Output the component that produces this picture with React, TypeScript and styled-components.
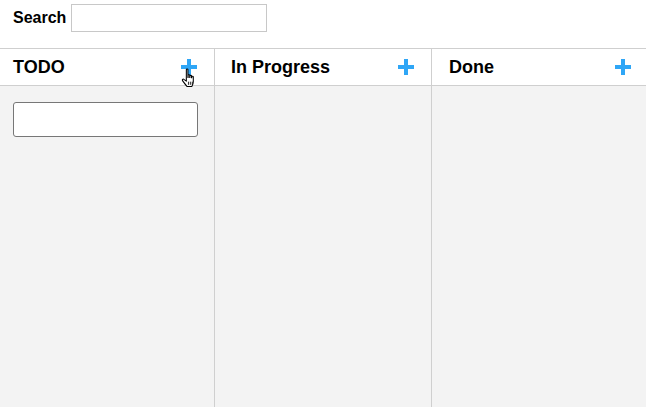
import { createGlobalStyle } from "styled-components";
import styled from "styled-components";

const GlobalStyle = createGlobalStyle`
  html, body {
    margin: 0;
    padding: 0;
    background: #fff;
    font-family: "Liberation Sans", Arial, sans-serif;
  }
`;

const columns = [
  { id: "todo", title: "TODO", editing: true, padLeft: 13, padRight: 17 },
  { id: "progress", title: "In Progress", editing: false, padLeft: 16, padRight: 17 },
  { id: "done", title: "Done", editing: false, padLeft: 17, padRight: 15 },
];

const PlusIcon = () => (
  <svg width="16" height="16" viewBox="0 0 16 16">
    <rect x="6" y="0" width="4" height="16" fill="#2fa6f6" />
    <rect x="0" y="6" width="16" height="4" fill="#2fa6f6" />
  </svg>
);

const HandCursor = () => (
  <svg width="17" height="20" viewBox="0 0 16 19">
    <path
      d="M5 1.5c0-.8 1.5-.8 1.5 0V9h.2V7c0-.8 1.5-.8 1.5 0v2h.2V7.6c0-.8 1.5-.8 1.5 0V9.3h.2V8.4c0-.8 1.5-.8 1.5 0V13c0 2-1 3.8-1.4 4.5H5.6C4.8 16.5 2.4 13.5 1.4 12c-.7-1 .4-2 1.3-1.2L5 12.5V1.5z"
      fill="#fff"
      stroke="#000"
      strokeWidth="1"
      strokeLinejoin="round"
    />
    <path d="M7 13v3M8.8 13v3M10.6 13v3" stroke="#000" strokeWidth="0.8" />
  </svg>
);

export default function App() {
  return (
    <Page>
      <GlobalStyle />
      <SearchBar>
        <SearchLabel>Search</SearchLabel>
        <SearchInput type="text" />
      </SearchBar>
      <Board>
        {columns.map((col) => (
          <Column key={col.id}>
            <ColumnHeader $padLeft={col.padLeft} $padRight={col.padRight}>
              <ColumnTitle>{col.title}</ColumnTitle>
              <AddButton>
                <PlusIcon />
                {col.editing && (
                  <CursorWrap>
                    <HandCursor />
                  </CursorWrap>
                )}
              </AddButton>
            </ColumnHeader>
            <ColumnBody>{col.editing && <CardInput type="text" />}</ColumnBody>
          </Column>
        ))}
      </Board>
    </Page>
  );
}

const Page = styled.div`
  display: flex;
  flex-direction: column;
  height: 407px;
  width: 646px;
`;

const SearchBar = styled.div`
  display: flex;
  align-items: flex-start;
  height: 48px;
  padding: 4px 13px 0;
  box-sizing: border-box;
  gap: 5px;
`;

const SearchLabel = styled.label`
  font-size: 16px;
  font-weight: bold;
  color: #000;
  line-height: 28px;
`;

const SearchInput = styled.input`
  width: 196px;
  height: 28px;
  box-sizing: border-box;
  border: 1px solid #c8c8c8;
  padding: 0 4px;
  margin: 0;
  outline: none;
`;

const Board = styled.div`
  flex: 1;
  display: grid;
  grid-template-columns: 214px 217px 215px;
  border-top: 1px solid #cfcfcf;
`;

const Column = styled.div`
  display: flex;
  flex-direction: column;
  border-left: 1px solid #cfcfcf;

  &:first-child {
    border-left: none;
  }
`;

const ColumnHeader = styled.div<{ $padLeft: number; $padRight: number }>`
  height: 36px;
  display: flex;
  align-items: center;
  justify-content: space-between;
  padding: 0 ${(p) => p.$padRight}px 0 ${(p) => p.$padLeft}px;
  border-bottom: 1px solid #cfcfcf;
  background: #fff;
`;

const ColumnTitle = styled.h2`
  margin: 0;
  font-size: 18px;
  font-weight: bold;
  color: #000;
`;

const AddButton = styled.div`
  position: relative;
  display: flex;
  cursor: pointer;
`;

const CursorWrap = styled.div`
  position: absolute;
  left: 0px;
  top: 9px;
`;

const ColumnBody = styled.div`
  flex: 1;
  background: #f3f3f3;
  padding: 16px 13px;
`;

const CardInput = styled.input`
  display: block;
  width: 185px;
  height: 35px;
  box-sizing: border-box;
  border: 1px solid #777;
  border-radius: 3px;
  background: #fff;
  margin: 0;
  outline: none;
`;
